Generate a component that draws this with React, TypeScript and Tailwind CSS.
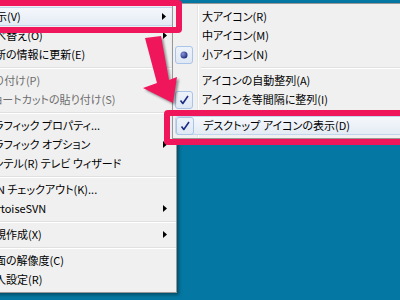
import React from "react";

type Item =
  | { sep: true }
  | { sep?: false; label: string; disabled?: boolean; sub?: boolean; hot?: boolean };

const mainItems: Item[] = [
  { label: "表示(V)", sub: true, hot: true },
  { label: "並べ替え(O)", sub: true },
  { label: "最新の情報に更新(E)" },
  { sep: true },
  { label: "貼り付け(P)", disabled: true },
  { label: "ショートカットの貼り付け(S)", disabled: true },
  { sep: true },
  { label: "グラフィック プロパティ..." },
  { label: "グラフィック オプション", sub: true },
  { label: "インテル(R) テレビ ウィザード" },
  { sep: true },
  { label: "SVN チェックアウト(K)..." },
  { label: "TortoiseSVN", sub: true },
  { sep: true },
  { label: "新規作成(X)", sub: true },
  { sep: true },
  { label: "画面の解像度(C)" },
  { label: "個人設定(R)" },
];

type SubItem =
  | { sep: true }
  | { sep?: false; label: string; mark?: "check" | "radio"; hot?: boolean };

const subItems: SubItem[] = [
  { label: "大アイコン(R)" },
  { label: "中アイコン(M)" },
  { label: "小アイコン(N)", mark: "radio" },
  { sep: true },
  { label: "アイコンの自動整列(A)" },
  { label: "アイコンを等間隔に整列(I)", mark: "check" },
  { sep: true },
  { label: "デスクトップ アイコンの表示(D)", mark: "check", hot: true },
];

function SubArrow() {
  return (
    <svg width="4" height="7" viewBox="0 0 4 7">
      <path d="M0 0 L4 3.5 L0 7 Z" fill="#000" />
    </svg>
  );
}

function Mark({ kind }: { kind: "check" | "radio" }) {
  return (
    <div className="w-[18px] h-[18px] rounded-[3px] border border-[#a9c4e6] bg-gradient-to-b from-[#eef3fa] to-[#dfe8f4] flex items-center justify-center">
      {kind === "check" ? (
        <svg width="12" height="12" viewBox="0 0 12 12">
          <path
            d="M2.5 6.5 L4.8 9.5 L10 2"
            fill="none"
            stroke="#1b2d84"
            strokeWidth="1.6"
            strokeLinejoin="round"
          />
        </svg>
      ) : (
        <svg width="8" height="8" viewBox="0 0 8 8">
          <defs>
            <radialGradient id="rb" cx="0.35" cy="0.35" r="0.7">
              <stop offset="0" stopColor="#8a96d8" />
              <stop offset="1" stopColor="#1c2a7e" />
            </radialGradient>
          </defs>
          <circle cx="4" cy="4" r="3.5" fill="url(#rb)" />
        </svg>
      )}
    </div>
  );
}

function Separator({ left }: { left: number }) {
  return (
    <div className="h-[7px] flex flex-col justify-center">
      <div style={{ marginLeft: left }} className="h-px bg-[#e0e0e0]" />
      <div style={{ marginLeft: left }} className="h-px bg-white" />
    </div>
  );
}

export default function App() {
  return (
    <div className="relative w-[400px] h-[300px] overflow-hidden bg-[#0477a2] font-['Noto_Sans_CJK_JP',sans-serif] text-[11px] leading-none text-black [font-feature-settings:'palt']">
      {/* main context menu */}
      <div className="absolute left-[-41px] top-[3px] w-[218px] bg-[#f0f0f0] border border-[#979797] py-[3px] shadow-[2px_2px_3px_rgba(0,0,0,0.35)]">
        {mainItems.map((it, i) =>
          it.sep ? (
            <Separator key={i} left={28} />
          ) : (
            <div
              key={i}
              className={`mx-[2px] h-[19px] flex items-center pl-[22px] pr-[7px] ${
                it.hot
                  ? "rounded-[3px] border border-[#c3d5ec] bg-gradient-to-b from-[#f5f8fc] to-[#e4ebf4]"
                  : ""
              } ${it.disabled ? "text-[#6d6d6d]" : ""}`}
            >
              <span className="flex-1 whitespace-nowrap">{it.label}</span>
              {it.sub && <SubArrow />}
            </div>
          )
        )}
      </div>

      {/* submenu */}
      <div className="absolute left-[172px] top-[3px] w-[240px] bg-[#f0f0f0] border border-[#979797] py-[3px] shadow-[2px_2px_3px_rgba(0,0,0,0.35)]">
        <div className="absolute left-[24px] top-[1px] bottom-[1px] w-[2px] flex">
          <div className="w-px bg-[#e2e3e3]" />
          <div className="w-px bg-white" />
        </div>
        {subItems.map((it, i) =>
          it.sep ? (
            <Separator key={i} left={28} />
          ) : (
            <div
              key={i}
              className={`relative mx-[2px] h-[19px] flex items-center ${
                it.hot
                  ? "rounded-[3px] border border-[#c3d5ec] bg-gradient-to-b from-[#f5f8fc] to-[#e4ebf4]"
                  : ""
              }`}
            >
              <div className="w-[27px] flex items-center">
                {it.mark && <Mark kind={it.mark} />}
              </div>
              <span className="whitespace-nowrap">{it.label}</span>
            </div>
          )
        )}
      </div>

      {/* highlight boxes */}
      <div className="absolute left-[-10px] top-0 w-[192px] h-[33px] border-[6px] border-[#f0165c] rounded-[4px]" />
      <div className="absolute left-[164px] top-[110px] w-[260px] h-[35px] border-[6px] border-[#f0165c] rounded-[4px]" />

      {/* arrow */}
      <svg
        className="absolute left-0 top-0 drop-shadow-[2px_2px_1px_rgba(0,0,0,0.4)]"
        width="200"
        height="120"
        viewBox="0 0 200 120"
      >
        <polygon
          points="145,38 161,36 169,80 177,77 173,103 143,88 157,83"
          fill="#f0165c"
        />
      </svg>
    </div>
  );
}
